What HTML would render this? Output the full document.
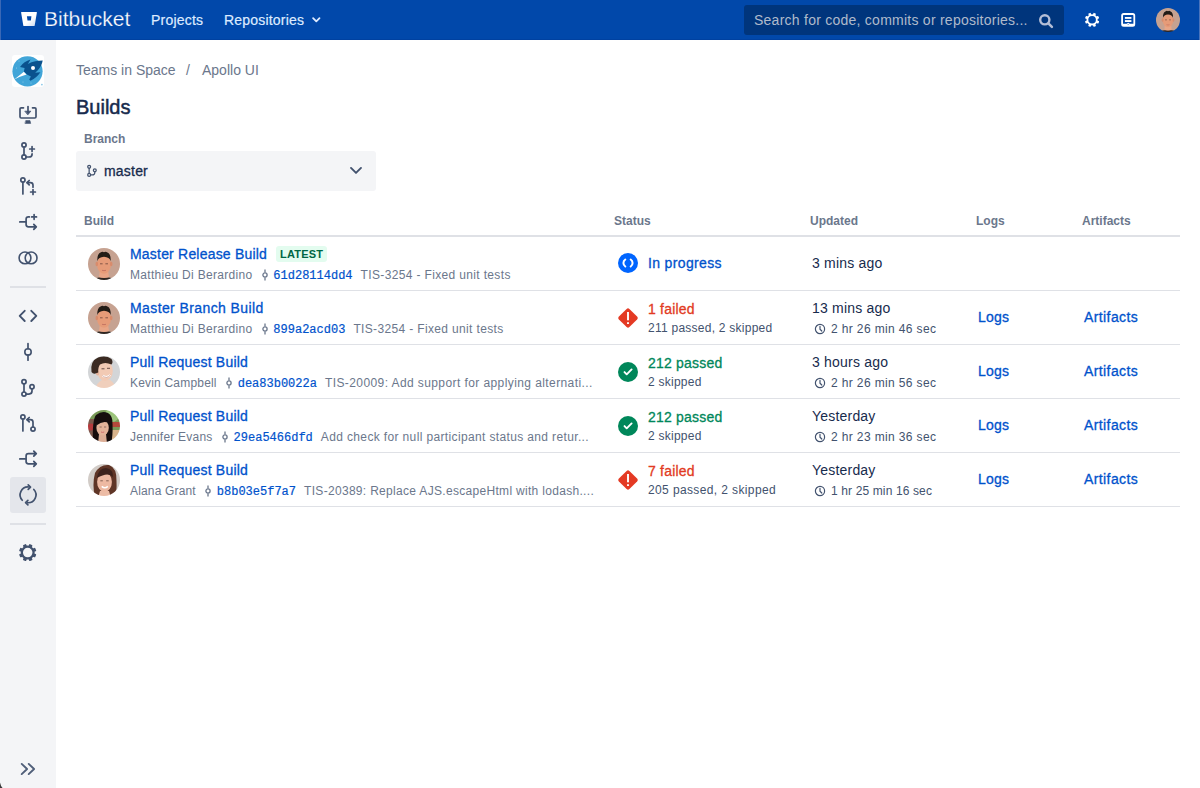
<!DOCTYPE html>
<html><head><meta charset="utf-8">
<style>
*{margin:0;padding:0;box-sizing:border-box}
html,body{width:1200px;height:788px;overflow:hidden;background:#fff;font-family:"Liberation Sans",sans-serif;color:#172B4D}
.a{position:absolute;white-space:nowrap}
#hdr{position:absolute;left:0;top:0;width:1200px;height:40px;background:#0148AA}
#side{position:absolute;left:0;top:40px;width:56px;height:748px;background:#F4F5F7}
.t14{font-size:14px;line-height:20px;letter-spacing:0.2px}
.t12{font-size:12px;line-height:16px;letter-spacing:0.25px}
.muted{color:#6B778C}
.med{-webkit-text-stroke:0.3px currentColor}
.link{color:#0052CC}
.hd{font-size:12px;line-height:16px;font-weight:bold;color:#6B778C}
.row{position:absolute;left:76px;width:1104px;height:1px;background:#DFE1E6}
.loz{display:inline-block;vertical-align:top;margin:2px 0 0 9px;height:16px;line-height:16px;padding:0 4px;border-radius:3px;background:#E3FCEF;color:#006644;font-size:11px;font-weight:bold}
.sub{display:flex;align-items:center;width:466px;font-size:12px;line-height:16px;letter-spacing:0.25px;color:#6B778C}
.sub .au{flex:none;letter-spacing:0.3px}
.sub .hash{flex:none;position:relative;top:1px;-webkit-text-stroke:0.2px currentColor;font-family:"Liberation Mono",monospace;letter-spacing:0;color:#0052CC;margin-right:8px}
.sub .msg{flex:none;white-space:nowrap;letter-spacing:0.35px}
</style></head><body>
<div id="hdr">
  <div class="a" style="left:44px;top:6px;font-size:21px;line-height:26px;color:#fff;-webkit-text-stroke:0.25px #0148AA">Bitbucket</div>
  <div class="a t14 med" style="left:151px;top:10px;color:#DEEBFF;-webkit-text-stroke:0.2px #DEEBFF">Projects</div>
  <div class="a t14 med" style="left:224px;top:10px;color:#DEEBFF;-webkit-text-stroke:0.2px #DEEBFF">Repositories</div>
  <div class="a" style="left:744px;top:5px;width:320px;height:30px;border-radius:3px;background:#00357C"></div>
  <div class="a t14" style="left:754px;top:10px;color:#AFBACB;letter-spacing:0.25px">Search for code, commits or repositories...</div>
  <div class="a" style="left:0;top:39px;width:1200px;height:1px;background:#0041A0"></div>
  <div class="a" style="left:0;top:0;width:1px;height:40px;background:#3A68B6"></div>
  <div class="a" style="left:1199px;top:0;width:1px;height:40px;background:#4A74BC"></div>
</div>

<svg class="a" style="left:0;top:0" width="1200" height="40" viewBox="0 0 1200 40">
 <defs><linearGradient id="bbg" x1="0" y1="0" x2="1" y2="1"><stop offset="0.55" stop-color="#fff"/><stop offset="1" stop-color="#C8D6EE"/></linearGradient></defs><path d="M21.5 12Q21 12 21.1 12.6L23.3 25.4Q23.4 26 24 26H34Q34.6 26 34.7 25.4L36.9 12.6Q37 12 36.5 12ZM30.9 20.6H27.5L26.9 16.3H31.4Z" fill="url(#bbg)" fill-rule="evenodd"/>
 <path d="M316.2 18.2L320.2 22.2" stroke="#DEEBFF" stroke-width="0"/>
 <path d="M313.1 18.2L316.3 21.4L319.5 18.2" stroke="#DEEBFF" stroke-width="1.8" fill="none" stroke-linecap="round" stroke-linejoin="round"/>
 <circle cx="1044.8" cy="19.8" r="4.6" fill="none" stroke="#B4BED6" stroke-width="2.4"/>
 <path d="M1048.6 23.6L1051.9 26.9" stroke="#B4BED6" stroke-width="2.5" stroke-linecap="round"/>
 <g transform="translate(1092.1 19.8)" fill="#fff">
   <path d="M0 -5.6A5.6 5.6 0 1 1 0 5.6A5.6 5.6 0 1 1 0 -5.6ZM0 -3.8A3.8 3.8 0 1 0 0 3.8A3.8 3.8 0 1 0 0 -3.8Z" fill-rule="evenodd"/>
   <rect x="-1.3" y="-7.2" width="2.6" height="2.6" rx="0.6" transform="rotate(22.5)"/>
   <rect x="-1.3" y="-7.2" width="2.6" height="2.6" rx="0.6" transform="rotate(67.5)"/>
   <rect x="-1.3" y="-7.2" width="2.6" height="2.6" rx="0.6" transform="rotate(112.5)"/>
   <rect x="-1.3" y="-7.2" width="2.6" height="2.6" rx="0.6" transform="rotate(157.5)"/>
   <rect x="-1.3" y="-7.2" width="2.6" height="2.6" rx="0.6" transform="rotate(202.5)"/>
   <rect x="-1.3" y="-7.2" width="2.6" height="2.6" rx="0.6" transform="rotate(247.5)"/>
   <rect x="-1.3" y="-7.2" width="2.6" height="2.6" rx="0.6" transform="rotate(292.5)"/>
   <rect x="-1.3" y="-7.2" width="2.6" height="2.6" rx="0.6" transform="rotate(337.5)"/>
 </g>
 <rect x="1122.1" y="14" width="12.2" height="11.8" rx="1.6" fill="none" stroke="#fff" stroke-width="1.8"/>
 <rect x="1124.9" y="17" width="6.5" height="1.85" fill="#fff"/>
 <rect x="1124.9" y="20.1" width="6.5" height="1.9" fill="#fff"/>
 <path d="M1122.5 24.5H1126.7L1128.2 23.5L1129.7 24.5H1134" stroke="#fff" stroke-width="1.4" fill="none"/>
</svg>

<div class="a" style="left:1156px;top:8px;width:24px;height:24px"><div style="transform:scale(0.75);transform-origin:0 0;width:32px;height:32px"><svg width="32" height="32" viewBox="0 0 32 32"><defs><clipPath id="cam1h"><circle cx="16" cy="16" r="16"/></clipPath><filter id="blm1h" x="-10%" y="-10%" width="120%" height="120%"><feGaussianBlur stdDeviation="0.45"/></filter></defs><g clip-path="url(#cam1h)"><g filter="url(#blm1h)"><rect x="-2" y="-2" width="36" height="36" fill="#C6A291"/><path d="M4 34 Q6 30 11 29.5 L21 29.5 Q26 30 28 34Z" fill="#2E2622"/><path d="M12 22 L20 22 L21 29 Q16 31 11 29Z" fill="#E8A586"/><ellipse cx="16" cy="16.5" rx="7" ry="9.3" fill="#E69B78"/><ellipse cx="8.8" cy="16" rx="1.3" ry="2.2" fill="#D88C6C"/><ellipse cx="23.2" cy="16" rx="1.3" ry="2.2" fill="#D88C6C"/><path d="M9.3 13 Q9 6 12.5 4.5 Q14.5 3 16 4.2 Q17.5 3 19.5 4.5 Q23 6 22.7 13 Q21.5 9.2 16 8.8 Q10.5 9.2 9.3 13Z" fill="#231A16"/><path d="M12 15.8h2.6M17.4 15.8h2.6" stroke="#7A5040" stroke-width="0.9"/><path d="M14 22.3 Q16 23 18 22.3" stroke="#C27060" stroke-width="0.9" fill="none"/></g></g></svg></div></div>
<div id="side">
  <div class="a" style="left:10px;top:246px;width:36px;height:2px;background:#DFE1E6"></div>
  <div class="a" style="left:10px;top:437px;width:36px;height:36px;background:#E4E6EB;border-radius:3px"></div>
  <div class="a" style="left:10px;top:483px;width:36px;height:2px;background:#DFE1E6"></div>
</div>

<svg class="a" style="left:12px;top:55px" width="32" height="32" viewBox="0 0 32 32">
 <rect width="32" height="32" rx="3" fill="#fff"/>
 <circle cx="15.5" cy="16.3" r="15.1" fill="#41A5D8"/>
 <path d="M2.2 24.4L11.9 16.7L14.6 19.6Q8 21.6 2.2 24.4Z" fill="#fff"/>
 <path d="M30.7 5.6Q30.2 8.4 29.1 10.6Q27.8 13.2 25.8 15.2L23.2 17.8L28.4 17.2Q24.8 22.6 18.5 25.8L17.2 24.4L18.9 21.5L14.9 19.5L11.9 16.5L12.6 12.9L8 11.9Q12 6.6 18.5 4.6L15.9 8.9Q19.5 6.8 23.2 6.3Q27 5.6 30.7 5.6Z" fill="#0A528E"/>
 <circle cx="21" cy="13.05" r="2" fill="#fff"/>
 <circle cx="7" cy="6" r="0.5" fill="#9BD0EC"/><circle cx="4.5" cy="13" r="0.5" fill="#9BD0EC"/><circle cx="11" cy="27" r="0.5" fill="#9BD0EC"/><circle cx="19" cy="28" r="0.5" fill="#9BD0EC"/>
 <circle cx="29.9" cy="29.6" r="0.9" fill="#8CC8E8"/>
</svg>


<svg class="a" style="left:0;top:0" width="56" height="788" viewBox="0 0 56 788" fill="none" stroke="#42526E" stroke-width="1.7" stroke-linecap="round" stroke-linejoin="round">
 <!-- download/clone -->
 <path d="M23.5 107.8H21.2Q20 107.8 20 109V116.8Q20 118 21.2 118H34.8Q36 118 36 116.8V109Q36 107.8 34.8 107.8H32.5"/>
 <path d="M28 106.6V112.5"/>
 <path d="M25.2 111.2H30.8L28 114.6Z" fill="#42526E" stroke-width="0.8"/>
 <path d="M25.3 123.4H30.7L30 120.6H26Z" fill="#42526E" stroke-width="0.6"/>
 <!-- branch create -->
 <circle cx="24" cy="144.9" r="2.1"/><circle cx="24" cy="157" r="2.1"/>
 <path d="M24 147V154.9"/><path d="M26.1 157H29Q32.1 157 32.1 153.9V153.8"/>
 <path d="M29.7 149H34.4M32.05 146.6V151.4"/>
 <!-- pr create -->
 <circle cx="22.9" cy="180" r="2.1"/><path d="M22.9 182.1V194"/>
 <path d="M33 187.2V185.2Q33 182.7 30.5 182.7H27.2"/><path d="M29.2 180.5L27 182.7L29.2 184.9"/>
 <path d="M30.6 192H35.4M33 189.6V194.4"/>
 <!-- deploy create -->
 <path d="M19.8 221.9H25.5"/><path d="M29.4 216.9H28.4Q26.1 216.9 26.1 219.2V224.6Q26.1 226.9 28.4 226.9H35"/>
 <path d="M33.8 224.4L36.3 226.9L33.8 229.4" fill="#42526E"/>
 <path d="M31.7 216.9H36.5M34.1 214.5V219.3"/>
 <!-- compare -->
 <circle cx="25" cy="257.9" r="5.9" stroke-width="1.6"/><circle cx="31.1" cy="257.9" r="5.9" stroke-width="1.6"/>
 <!-- code -->
 <path d="M24.7 310.8L19.7 315.9L24.7 321M31.3 310.8L36.3 315.9L31.3 321" stroke-width="1.9"/>
 <!-- commit -->
 <circle cx="28" cy="351.9" r="3.2" stroke-width="1.6"/><path d="M28 343.6V348.7M28 355.1V360.2"/>
 <!-- branches -->
 <circle cx="24" cy="381.8" r="2.1"/><circle cx="24" cy="394.1" r="2.1"/><circle cx="32" cy="386.8" r="2.1"/>
 <path d="M24 383.9V392"/><path d="M26.1 394.1H29Q32 394.1 32 391.1V388.9"/>
 <!-- pull requests -->
 <circle cx="22.9" cy="416.9" r="2.1"/><path d="M22.9 419V431"/>
 <circle cx="33" cy="429.1" r="2.1"/>
 <path d="M33 427V422.2Q33 419.7 30.5 419.7H27.2"/><path d="M29.2 417.5L27 419.7L29.2 421.9"/>
 <!-- deployments -->
 <path d="M19.8 458.9H25.5"/><path d="M35 453.7H28.4Q26.1 453.7 26.1 456V461.5Q26.1 463.8 28.4 463.8H35"/>
 <path d="M33.8 451.2L36.3 453.7L33.8 456.2" fill="#42526E"/>
 <path d="M33.8 461.3L36.3 463.8L33.8 466.3" fill="#42526E"/>
 <!-- pipelines -->
 <path d="M22.27 500.24A7.9 7.9 0 0 1 28.74 486.98" stroke-width="1.7"/>
 <path d="M28.2 484.8L30.5 487.1L28.2 489.4" stroke-width="1.7"/>
 <path d="M33.83 489.46A7.9 7.9 0 0 1 27.36 502.72" stroke-width="1.7"/>
 <path d="M27.9 500.3L25.6 502.6L27.9 504.9" stroke-width="1.7"/>
 <!-- settings gear -->
 <g transform="translate(27.7 552.6)" fill="#42526E" stroke="none">
   <path d="M0 -7A7 7 0 1 1 0 7A7 7 0 1 1 0 -7ZM0 -4.75A4.75 4.75 0 1 0 0 4.75A4.75 4.75 0 1 0 0 -4.75Z" fill-rule="evenodd"/>
   <rect x="-1.75" y="-8.7" width="3.5" height="3.2" rx="0.8" transform="rotate(22.5)"/><rect x="-1.75" y="-8.7" width="3.5" height="3.2" rx="0.8" transform="rotate(67.5)"/><rect x="-1.75" y="-8.7" width="3.5" height="3.2" rx="0.8" transform="rotate(112.5)"/><rect x="-1.75" y="-8.7" width="3.5" height="3.2" rx="0.8" transform="rotate(157.5)"/><rect x="-1.75" y="-8.7" width="3.5" height="3.2" rx="0.8" transform="rotate(202.5)"/><rect x="-1.75" y="-8.7" width="3.5" height="3.2" rx="0.8" transform="rotate(247.5)"/><rect x="-1.75" y="-8.7" width="3.5" height="3.2" rx="0.8" transform="rotate(292.5)"/><rect x="-1.75" y="-8.7" width="3.5" height="3.2" rx="0.8" transform="rotate(337.5)"/>
 </g>
 <!-- expand -->
 <path d="M21.7 763.9L27.1 769L21.7 774.1M28.7 763.9L34.1 769L28.7 774.1" stroke-width="1.9" stroke="#505F79"/>
</svg>

<div class="a t14 muted" style="left:76px;top:60px;letter-spacing:0">Teams in Space</div>
<div class="a t14 muted" style="left:186px;top:60px">/</div>
<div class="a t14 muted" style="left:202px;top:60px;letter-spacing:0">Apollo UI</div>
<div class="a med" style="left:76px;top:95px;font-size:20px;line-height:24px;-webkit-text-stroke:0.5px #172B4D">Builds</div>
<div class="a hd" style="left:84px;top:131px">Branch</div>
<div class="a" style="left:76px;top:151px;width:300px;height:40px;border-radius:3px;background:#F4F5F7"></div>
<svg class="a" style="left:86px;top:164px" width="12" height="14" viewBox="0 0 12 14" fill="none" stroke="#42526E" stroke-width="1.25" stroke-linecap="round">
 <circle cx="3.15" cy="2.8" r="1.45"/><circle cx="3.15" cy="10.9" r="1.45"/><circle cx="8.8" cy="6.35" r="1.45"/>
 <path d="M3.15 4.25V9.45M4.6 10.9H6.3Q8.8 10.9 8.8 8.4V7.8"/>
</svg>
<div class="a t14 med" style="left:104px;top:161px;letter-spacing:0.2px">master</div>
<svg class="a" style="left:349px;top:166px" width="14" height="10" viewBox="0 0 14 10"><path d="M2 1.9L7 6.9L12 1.9" stroke="#42526E" stroke-width="1.9" fill="none" stroke-linecap="round" stroke-linejoin="round"/></svg>

<div class="a hd" style="left:84px;top:213px">Build</div>
<div class="a hd" style="left:614px;top:213px">Status</div>
<div class="a hd" style="left:810px;top:213px">Updated</div>
<div class="a hd" style="left:976px;top:213px">Logs</div>
<div class="a hd" style="left:1082px;top:213px">Artifacts</div>
<div class="a" style="left:76px;top:235px;width:1104px;height:2px;background:#DFE1E6"></div>
<div class="row" style="top:290px"></div>
<div class="row" style="top:344px"></div>
<div class="row" style="top:398px"></div>
<div class="row" style="top:452px"></div>
<div class="row" style="top:506px"></div>
<div class="a" style="left:88px;top:248px;width:32px;height:32px"><svg width="32" height="32" viewBox="0 0 32 32"><defs><clipPath id="cam10"><circle cx="16" cy="16" r="16"/></clipPath><filter id="blm10" x="-10%" y="-10%" width="120%" height="120%"><feGaussianBlur stdDeviation="0.45"/></filter></defs><g clip-path="url(#cam10)"><g filter="url(#blm10)"><rect x="-2" y="-2" width="36" height="36" fill="#C6A291"/><path d="M4 34 Q6 30 11 29.5 L21 29.5 Q26 30 28 34Z" fill="#2E2622"/><path d="M12 22 L20 22 L21 29 Q16 31 11 29Z" fill="#E8A586"/><ellipse cx="16" cy="16.5" rx="7" ry="9.3" fill="#E69B78"/><ellipse cx="8.8" cy="16" rx="1.3" ry="2.2" fill="#D88C6C"/><ellipse cx="23.2" cy="16" rx="1.3" ry="2.2" fill="#D88C6C"/><path d="M9.3 13 Q9 6 12.5 4.5 Q14.5 3 16 4.2 Q17.5 3 19.5 4.5 Q23 6 22.7 13 Q21.5 9.2 16 8.8 Q10.5 9.2 9.3 13Z" fill="#231A16"/><path d="M12 15.8h2.6M17.4 15.8h2.6" stroke="#7A5040" stroke-width="0.9"/><path d="M14 22.3 Q16 23 18 22.3" stroke="#C27060" stroke-width="0.9" fill="none"/></g></g></svg></div>
<div class="a t14 link" style="left:130px;top:244px"><span class="med" style="letter-spacing:0.2px">Master Release Build</span><span class="loz">LATEST</span></div>
<div class="a sub" style="left:130px;top:267px"><span class="au" style="letter-spacing:0.3px">Matthieu Di Berardino</span><svg width="6" height="12" viewBox="0 0 6 12" style="flex:none;margin:0 5.5px 0 9.5px;position:relative;top:-0.5px"><path d="M3 0.5V3.6M3 8.4V11.5" stroke="#6B778C" stroke-width="1.3"/><circle cx="3" cy="6" r="2.1" fill="none" stroke="#6B778C" stroke-width="1.3"/></svg><span class="hash">61d28114dd4</span><span class="msg" style="letter-spacing:0.35px">TIS-3254 - Fixed unit tests</span></div>
<div class="a" style="left:618px;top:253px;width:20px;height:20px"><svg width="20" height="20" viewBox="0 0 20 20"><circle cx="10" cy="10" r="10" fill="#0065FF"/><path d="M7.3 6.5A4.2 4.2 0 0 0 7.3 13.5" stroke="#fff" stroke-width="2" fill="none" stroke-linecap="round"/><path d="M12.7 6.5A4.2 4.2 0 0 1 12.7 13.5" stroke="#fff" stroke-width="2" fill="none" stroke-linecap="round"/></svg></div>
<div class="a t14 med" style="left:648px;top:253px;color:#0052CC;letter-spacing:0.35px">In progress</div>
<div class="a t14" style="left:812px;top:253px">3 mins ago</div>
<div class="a" style="left:88px;top:302px;width:32px;height:32px"><svg width="32" height="32" viewBox="0 0 32 32"><defs><clipPath id="cam11"><circle cx="16" cy="16" r="16"/></clipPath><filter id="blm11" x="-10%" y="-10%" width="120%" height="120%"><feGaussianBlur stdDeviation="0.45"/></filter></defs><g clip-path="url(#cam11)"><g filter="url(#blm11)"><rect x="-2" y="-2" width="36" height="36" fill="#C6A291"/><path d="M4 34 Q6 30 11 29.5 L21 29.5 Q26 30 28 34Z" fill="#2E2622"/><path d="M12 22 L20 22 L21 29 Q16 31 11 29Z" fill="#E8A586"/><ellipse cx="16" cy="16.5" rx="7" ry="9.3" fill="#E69B78"/><ellipse cx="8.8" cy="16" rx="1.3" ry="2.2" fill="#D88C6C"/><ellipse cx="23.2" cy="16" rx="1.3" ry="2.2" fill="#D88C6C"/><path d="M9.3 13 Q9 6 12.5 4.5 Q14.5 3 16 4.2 Q17.5 3 19.5 4.5 Q23 6 22.7 13 Q21.5 9.2 16 8.8 Q10.5 9.2 9.3 13Z" fill="#231A16"/><path d="M12 15.8h2.6M17.4 15.8h2.6" stroke="#7A5040" stroke-width="0.9"/><path d="M14 22.3 Q16 23 18 22.3" stroke="#C27060" stroke-width="0.9" fill="none"/></g></g></svg></div>
<div class="a t14 link" style="left:130px;top:298px"><span class="med" style="letter-spacing:0.4px">Master Branch Build</span></div>
<div class="a sub" style="left:130px;top:321px"><span class="au" style="letter-spacing:0.3px">Matthieu Di Berardino</span><svg width="6" height="12" viewBox="0 0 6 12" style="flex:none;margin:0 5.5px 0 9.5px;position:relative;top:-0.5px"><path d="M3 0.5V3.6M3 8.4V11.5" stroke="#6B778C" stroke-width="1.3"/><circle cx="3" cy="6" r="2.1" fill="none" stroke="#6B778C" stroke-width="1.3"/></svg><span class="hash">899a2acd03</span><span class="msg" style="letter-spacing:0.35px">TIS-3254 - Fixed unit tests</span></div>
<div class="a" style="left:618px;top:308px;width:20px;height:20px"><svg width="20" height="20" viewBox="0 0 20 20"><path d="M8.6 0.9 Q10 -0.4 11.4 0.9 L19.1 8.6 Q20.4 10 19.1 11.4 L11.4 19.1 Q10 20.4 8.6 19.1 L0.9 11.4 Q-0.4 10 0.9 8.6Z" fill="#E43A24"/><rect x="9.05" y="4" width="1.9" height="8.3" fill="#fff"/><rect x="9.05" y="14.2" width="1.9" height="1.8" fill="#fff"/></svg></div>
<div class="a t14 med" style="left:648px;top:299px;color:#E23A22">1 failed</div>
<div class="a t12" style="left:648px;top:320px;color:#42526E;letter-spacing:0.25px">211 passed, 2 skipped</div>
<div class="a t14" style="left:812px;top:298px">13 mins ago</div>
<div class="a t12" style="left:814px;top:321px;padding-left:17px;color:#42526E;letter-spacing:0.37px"><svg width="12" height="12" viewBox="0 0 12 12" style="position:absolute;left:0;top:1.5px"><circle cx="6" cy="6" r="4.6" fill="none" stroke="#42526E" stroke-width="1.2"/><path d="M6 3.4V6.2L7.8 8" stroke="#42526E" stroke-width="1.2" fill="none" stroke-linecap="round"/></svg>2 hr 26 min 46 sec</div>
<div class="a t14 link med" style="left:978px;top:307px">Logs</div>
<div class="a t14 link med" style="left:1084px;top:307px;letter-spacing:0.4px">Artifacts</div>
<div class="a" style="left:88px;top:356px;width:32px;height:32px"><svg width="32" height="32" viewBox="0 0 32 32"><defs><clipPath id="cakc"><circle cx="16" cy="16" r="16"/></clipPath><filter id="blkc" x="-10%" y="-10%" width="120%" height="120%"><feGaussianBlur stdDeviation="0.45"/></filter></defs><g clip-path="url(#cakc)"><g filter="url(#blkc)"><rect x="-2" y="-2" width="36" height="36" fill="#D3D5D7"/><path d="M7 34 Q9 26 14 24 L22 24 Q27 27 28 34Z" fill="#F0CFBC"/><ellipse cx="17" cy="15" rx="7.8" ry="9.8" fill="#F2CAB4"/><ellipse cx="9.6" cy="17" rx="1.7" ry="2.5" fill="#E5B49C"/><path d="M3.5 16 Q2 5 10 1.5 Q18 -1 23.5 3 Q25.5 6 23.5 8.5 Q17 5.5 12 8.5 Q10 11 10.2 16.5 Q5.5 19 3.5 16Z" fill="#3A2A20"/><path d="M13.5 12.8h3M19 12.3h3" stroke="#5A4038" stroke-width="0.9"/><path d="M14.5 19.5 Q18.5 22.5 22.5 18.8" stroke="#FFFFFF" stroke-width="1.7" fill="none"/><path d="M14.5 19.5 Q18.5 23.6 22.5 18.8" stroke="#B06A5A" stroke-width="0.5" fill="none"/></g></g></svg></div>
<div class="a t14 link" style="left:130px;top:352px"><span class="med" style="letter-spacing:0.2px">Pull Request Build</span></div>
<div class="a sub" style="left:130px;top:375px"><span class="au" style="letter-spacing:0.19px">Kevin Campbell</span><svg width="6" height="12" viewBox="0 0 6 12" style="flex:none;margin:0 5.5px 0 9.5px;position:relative;top:-0.5px"><path d="M3 0.5V3.6M3 8.4V11.5" stroke="#6B778C" stroke-width="1.3"/><circle cx="3" cy="6" r="2.1" fill="none" stroke="#6B778C" stroke-width="1.3"/></svg><span class="hash">dea83b0022a</span><span class="msg" style="letter-spacing:0.41px">TIS-20009: Add support for applying alternati...</span></div>
<div class="a" style="left:618px;top:362px;width:20px;height:20px"><svg width="20" height="20" viewBox="0 0 20 20"><circle cx="10" cy="10" r="10" fill="#00875A"/><path d="M6.5 10.1 L8.7 12.3 L13.6 7.4" stroke="#fff" stroke-width="1.9" fill="none" stroke-linecap="round" stroke-linejoin="round"/></svg></div>
<div class="a t14 med" style="left:648px;top:353px;color:#00875A">212 passed</div>
<div class="a t12" style="left:648px;top:374px;color:#42526E;letter-spacing:0.25px">2 skipped</div>
<div class="a t14" style="left:812px;top:352px">3 hours ago</div>
<div class="a t12" style="left:814px;top:375px;padding-left:17px;color:#42526E;letter-spacing:0.37px"><svg width="12" height="12" viewBox="0 0 12 12" style="position:absolute;left:0;top:1.5px"><circle cx="6" cy="6" r="4.6" fill="none" stroke="#42526E" stroke-width="1.2"/><path d="M6 3.4V6.2L7.8 8" stroke="#42526E" stroke-width="1.2" fill="none" stroke-linecap="round"/></svg>2 hr 26 min 56 sec</div>
<div class="a t14 link med" style="left:978px;top:361px">Logs</div>
<div class="a t14 link med" style="left:1084px;top:361px;letter-spacing:0.4px">Artifacts</div>
<div class="a" style="left:88px;top:410px;width:32px;height:32px"><svg width="32" height="32" viewBox="0 0 32 32"><defs><clipPath id="caje"><circle cx="16" cy="16" r="16"/></clipPath><filter id="blje" x="-10%" y="-10%" width="120%" height="120%"><feGaussianBlur stdDeviation="0.45"/></filter></defs><g clip-path="url(#caje)"><g filter="url(#blje)"><rect x="-2" y="-2" width="36" height="36" fill="#7A9A58"/><circle cx="24" cy="5" r="7" fill="#9CC47C"/><rect x="-2" y="9" width="9" height="25" fill="#7E5A4E"/><circle cx="3" cy="17" r="3.6" fill="#B43A3C"/><rect x="22" y="12" width="12" height="5" fill="#B44A3A"/><rect x="22" y="20" width="12" height="14" fill="#D9B48C"/><path d="M5 34 Q4 10 8 5 Q14 0 20 3 Q25 6 24.5 14 Q25 26 23 34Z" fill="#141010"/><path d="M11 24 L18 24 L19 34 L10 34Z" fill="#DCAE96"/><ellipse cx="14.6" cy="17.8" rx="6.2" ry="7.8" fill="#E4B39A"/><path d="M8.3 15.5 Q8.8 8.5 14.5 8.7 Q19.5 9 21 13 Q15 10 8.3 15.5Z" fill="#141010"/><path d="M11.5 17h2.2M16 17h2.2" stroke="#7A5A50" stroke-width="0.8"/><path d="M13 22 Q14.6 22.8 16.2 22" stroke="#D07070" stroke-width="1" fill="none"/></g></g></svg></div>
<div class="a t14 link" style="left:130px;top:406px"><span class="med" style="letter-spacing:0.2px">Pull Request Build</span></div>
<div class="a sub" style="left:130px;top:429px"><span class="au" style="letter-spacing:0.23px">Jennifer Evans</span><svg width="6" height="12" viewBox="0 0 6 12" style="flex:none;margin:0 5.5px 0 9.5px;position:relative;top:-0.5px"><path d="M3 0.5V3.6M3 8.4V11.5" stroke="#6B778C" stroke-width="1.3"/><circle cx="3" cy="6" r="2.1" fill="none" stroke="#6B778C" stroke-width="1.3"/></svg><span class="hash">29ea5466dfd</span><span class="msg" style="letter-spacing:0.36px">Add check for null participant status and retur...</span></div>
<div class="a" style="left:618px;top:416px;width:20px;height:20px"><svg width="20" height="20" viewBox="0 0 20 20"><circle cx="10" cy="10" r="10" fill="#00875A"/><path d="M6.5 10.1 L8.7 12.3 L13.6 7.4" stroke="#fff" stroke-width="1.9" fill="none" stroke-linecap="round" stroke-linejoin="round"/></svg></div>
<div class="a t14 med" style="left:648px;top:407px;color:#00875A">212 passed</div>
<div class="a t12" style="left:648px;top:428px;color:#42526E;letter-spacing:0.25px">2 skipped</div>
<div class="a t14" style="left:812px;top:406px">Yesterday</div>
<div class="a t12" style="left:814px;top:429px;padding-left:17px;color:#42526E;letter-spacing:0.37px"><svg width="12" height="12" viewBox="0 0 12 12" style="position:absolute;left:0;top:1.5px"><circle cx="6" cy="6" r="4.6" fill="none" stroke="#42526E" stroke-width="1.2"/><path d="M6 3.4V6.2L7.8 8" stroke="#42526E" stroke-width="1.2" fill="none" stroke-linecap="round"/></svg>2 hr 23 min 36 sec</div>
<div class="a t14 link med" style="left:978px;top:415px">Logs</div>
<div class="a t14 link med" style="left:1084px;top:415px;letter-spacing:0.4px">Artifacts</div>
<div class="a" style="left:88px;top:464px;width:32px;height:32px"><svg width="32" height="32" viewBox="0 0 32 32"><defs><clipPath id="caag"><circle cx="16" cy="16" r="16"/></clipPath><filter id="blag" x="-10%" y="-10%" width="120%" height="120%"><feGaussianBlur stdDeviation="0.45"/></filter></defs><g clip-path="url(#caag)"><g filter="url(#blag)"><rect x="-2" y="-2" width="36" height="36" fill="#D2CCC7"/><path d="M7 34 Q4 20 7 9 Q12 0 21 1 Q29 4 28.5 17 Q29 28 27 34Z" fill="#5E3426"/><path d="M12 27 L21 27 L23 34 L10 34Z" fill="#ECBCA6"/><ellipse cx="16.5" cy="18" rx="7.4" ry="10" fill="#EDB9A2"/><path d="M9 14 Q10 4.5 18 4 Q25.5 5 25 13 Q20 7.5 9 14Z" fill="#3E241C"/><path d="M12.3 16.8h2.5M18.2 16.8h2.5" stroke="#6A4A40" stroke-width="0.8"/><path d="M13.8 22.3 Q16.8 25.2 19.8 22.3" stroke="#FFFFFF" stroke-width="1.6" fill="none"/></g></g></svg></div>
<div class="a t14 link" style="left:130px;top:460px"><span class="med" style="letter-spacing:0.2px">Pull Request Build</span></div>
<div class="a sub" style="left:130px;top:483px"><span class="au" style="letter-spacing:0.16px">Alana Grant</span><svg width="6" height="12" viewBox="0 0 6 12" style="flex:none;margin:0 5.5px 0 9.5px;position:relative;top:-0.5px"><path d="M3 0.5V3.6M3 8.4V11.5" stroke="#6B778C" stroke-width="1.3"/><circle cx="3" cy="6" r="2.1" fill="none" stroke="#6B778C" stroke-width="1.3"/></svg><span class="hash">b8b03e5f7a7</span><span class="msg" style="letter-spacing:0.31px">TIS-20389: Replace AJS.escapeHtml with lodash....</span></div>
<div class="a" style="left:618px;top:470px;width:20px;height:20px"><svg width="20" height="20" viewBox="0 0 20 20"><path d="M8.6 0.9 Q10 -0.4 11.4 0.9 L19.1 8.6 Q20.4 10 19.1 11.4 L11.4 19.1 Q10 20.4 8.6 19.1 L0.9 11.4 Q-0.4 10 0.9 8.6Z" fill="#E43A24"/><rect x="9.05" y="4" width="1.9" height="8.3" fill="#fff"/><rect x="9.05" y="14.2" width="1.9" height="1.8" fill="#fff"/></svg></div>
<div class="a t14 med" style="left:648px;top:461px;color:#E23A22">7 failed</div>
<div class="a t12" style="left:648px;top:482px;color:#42526E;letter-spacing:0.38px">205 passed, 2 skipped</div>
<div class="a t14" style="left:812px;top:460px">Yesterday</div>
<div class="a t12" style="left:814px;top:483px;padding-left:17px;color:#42526E;letter-spacing:0.13px"><svg width="12" height="12" viewBox="0 0 12 12" style="position:absolute;left:0;top:1.5px"><circle cx="6" cy="6" r="4.6" fill="none" stroke="#42526E" stroke-width="1.2"/><path d="M6 3.4V6.2L7.8 8" stroke="#42526E" stroke-width="1.2" fill="none" stroke-linecap="round"/></svg>1 hr 25 min 16 sec</div>
<div class="a t14 link med" style="left:978px;top:469px">Logs</div>
<div class="a t14 link med" style="left:1084px;top:469px;letter-spacing:0.4px">Artifacts</div>
<svg class="a" style="left:0;top:780px" width="8" height="8" viewBox="0 0 8 8"><path d="M0 2.5Q0.8 6.5 2.6 8H0Z" fill="#3A3A3A"/></svg>
</body></html>
